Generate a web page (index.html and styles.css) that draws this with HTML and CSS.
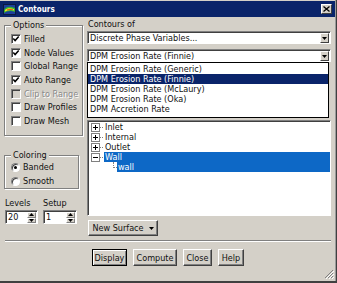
FILE: index.html
```html
<!DOCTYPE html>
<html lang="en">
<head>
<meta charset="UTF-8">
<meta name="viewport" content="width=device-width, initial-scale=1.0">
<title>Contours</title>
<link rel="stylesheet" href="styles.css">
</head>
<body>
  <div class="window">
    <div class="titlebar">
      <svg class="app-icon" width="13" height="11" viewBox="0 0 13 11">
        <rect x="0.5" y="0.5" width="12" height="10" fill="#1c3f9c" stroke="#0a1a40"/>
        <path d="M1 6 C3 2, 7 2, 12 4 L12 8 C8 6, 4 7, 1 9 Z" fill="#2fae3a"/>
        <path d="M2 6 C4 4, 7 4, 11 5 L11 6.5 C8 5.5, 5 6, 2 7.5 Z" fill="#f2e21c"/>
        <path d="M4 5.6 C6 4.8, 8 4.8, 10 5.3 L10 5.9 C8 5.6, 6 5.8, 4 6.4 Z" fill="#e23a1c"/>
      </svg>
      <span class="title">Contours</span>
      <span class="close-btn">
        <svg width="7" height="6" viewBox="0 0 7 6"><path d="M0.5 0.5 L6.5 5.5 M6.5 0.5 L0.5 5.5" stroke="#000" stroke-width="1.3"/></svg>
      </span>
    </div>

    <div class="content">
      <!-- left column -->
      <div class="left-col">
        <div class="group options">
          <span class="group-title">Options</span>
          <div class="check-row"><span class="check-box"><svg width="8" height="8" viewBox="0 0 8 8"><polyline points="1.3,3.6 3.1,5.6 6.7,1.4" fill="none" stroke="#000" stroke-width="1.5"/></svg></span>Filled</div>
          <div class="check-row"><span class="check-box"><svg width="8" height="8" viewBox="0 0 8 8"><polyline points="1.3,3.6 3.1,5.6 6.7,1.4" fill="none" stroke="#000" stroke-width="1.5"/></svg></span>Node Values</div>
          <div class="check-row"><span class="check-box"></span>Global Range</div>
          <div class="check-row"><span class="check-box"><svg width="8" height="8" viewBox="0 0 8 8"><polyline points="1.3,3.6 3.1,5.6 6.7,1.4" fill="none" stroke="#000" stroke-width="1.5"/></svg></span>Auto Range</div>
          <div class="check-row disabled"><span class="check-box"></span>Clip to Range</div>
          <div class="check-row"><span class="check-box"></span>Draw Profiles</div>
          <div class="check-row"><span class="check-box"></span>Draw Mesh</div>
        </div>

        <div class="group coloring">
          <span class="group-title">Coloring</span>
          <div class="radio-row"><span class="radio-dot on"></span>Banded</div>
          <div class="radio-row"><span class="radio-dot"></span>Smooth</div>
        </div>

        <div class="spin-row">
          <div class="spin-field levels">
            <div class="spin-label">Levels</div>
            <div class="spin">
              <span class="spin-value">20</span>
              <span class="spin-btns">
                <span class="spin-btn"><svg width="5" height="3" viewBox="0 0 5 3"><path d="M2.5 0 L5 3 L0 3 Z" fill="#000"/></svg></span>
                <span class="spin-btn"><svg width="5" height="3" viewBox="0 0 5 3"><path d="M0 0 L5 0 L2.5 3 Z" fill="#000"/></svg></span>
              </span>
            </div>
          </div>
          <div class="spin-field setup">
            <div class="spin-label">Setup</div>
            <div class="spin">
              <span class="spin-value">1</span>
              <span class="spin-btns">
                <span class="spin-btn"><svg width="5" height="3" viewBox="0 0 5 3"><path d="M2.5 0 L5 3 L0 3 Z" fill="#000"/></svg></span>
                <span class="spin-btn"><svg width="5" height="3" viewBox="0 0 5 3"><path d="M0 0 L5 0 L2.5 3 Z" fill="#000"/></svg></span>
              </span>
            </div>
          </div>
        </div>
      </div>

      <!-- right column -->
      <div class="right-col">
        <div class="field-label">Contours of</div>
        <div class="combo first">
          <span class="combo-text">Discrete Phase Variables...</span>
          <span class="combo-arrow"><svg width="5" height="3" viewBox="0 0 5 3"><path d="M0 0 L5 0 L2.5 3 Z" fill="#000"/></svg></span>
        </div>
        <div class="combo-wrap">
          <div class="combo">
            <span class="combo-text">DPM Erosion Rate (Finnie)</span>
            <span class="combo-arrow"><svg width="5" height="3" viewBox="0 0 5 3"><path d="M0 0 L5 0 L2.5 3 Z" fill="#000"/></svg></span>
          </div>
          <div class="popup">
            <div class="popup-item">DPM Erosion Rate (Generic)</div>
            <div class="popup-item selected">DPM Erosion Rate (Finnie)</div>
            <div class="popup-item">DPM Erosion Rate (McLaury)</div>
            <div class="popup-item">DPM Erosion Rate (Oka)</div>
            <div class="popup-item">DPM Accretion Rate</div>
          </div>
        </div>

        <div class="under-popup">
          <span class="hidden-field"></span>
          <span class="hidden-field"></span>
          <span class="hidden-field"></span>
          <span class="hidden-field"></span>
        </div>

        <div class="surface-list">
          <div class="tree-row"><svg width="9" height="9" viewBox="0 0 9 9"><rect x="0.5" y="0.5" width="8" height="8" fill="#fff" stroke="#808080"/><path d="M2 4.5h5M4.5 2v5" stroke="#000"/></svg><span class="tree-line"></span><span class="tree-label">Inlet</span></div>
          <div class="tree-row"><svg width="9" height="9" viewBox="0 0 9 9"><rect x="0.5" y="0.5" width="8" height="8" fill="#fff" stroke="#808080"/><path d="M2 4.5h5M4.5 2v5" stroke="#000"/></svg><span class="tree-line"></span><span class="tree-label">Internal</span></div>
          <div class="tree-row"><svg width="9" height="9" viewBox="0 0 9 9"><rect x="0.5" y="0.5" width="8" height="8" fill="#fff" stroke="#808080"/><path d="M2 4.5h5M4.5 2v5" stroke="#000"/></svg><span class="tree-line"></span><span class="tree-label">Outlet</span></div>
          <div class="tree-row selected"><svg width="9" height="9" viewBox="0 0 9 9"><rect x="0.5" y="0.5" width="8" height="8" fill="#fff" stroke="#808080"/><path d="M2 4.5h5" stroke="#000"/></svg><span class="tree-line"></span><span class="tree-label">Wall</span></div>
          <div class="tree-row child selected"><span class="tree-elbow"></span><span class="tree-label">wall</span></div>
        </div>

        <div class="btn new-surface">New Surface <svg width="5" height="3" viewBox="0 0 5 3"><path d="M0 0 L5 0 L2.5 3 Z" fill="#000"/></svg></div>
      </div>
    </div>

    <div class="separator"></div>

    <div class="button-row">
      <div class="btn default display">Display</div>
      <div class="btn compute">Compute</div>
      <div class="btn close">Close</div>
      <div class="btn help">Help</div>
    </div>

    <div class="grip-row">
      <svg class="grip" width="10" height="10" viewBox="0 0 10 10">
        <path d="M9 1 L1 9 M9 4 L4 9 M9 7 L7 9" stroke="#808080"/>
        <path d="M10 2 L2 10 M10 5 L5 10 M10 8 L8 10" stroke="#fff"/>
      </svg>
    </div>
  </div>
</body>
</html>
```

FILE: styles.css
```css
body {
  margin: 0;
  background-color: #404040;
  font-family: "DejaVu Sans Condensed", "Liberation Sans", sans-serif;
  font-size: 9px;
  color: #111;
}
.window {
  width: 335px;
  height: 281px;
  background-color: #d4d0c8;
  border-right: 1px solid #9a9a9a;
  overflow: hidden;
}

/* title bar */
.titlebar {
  height: 16px;
  border-top: 1px solid #d4d0c8;
  background-color: #0a246a;
  color: #fff;
  display: flex;
  align-items: center;
  padding-left: 3px;
}
.app-icon {
  margin-right: 2px;
}
.title {
  font-weight: bold;
  font-size: 8px;
}
.close-btn {
  margin-left: auto;
  margin-right: 3px;
  width: 9px;
  height: 8px;
  background-color: #d4d0c8;
  border: 1px solid;
  border-color: #fff #404040 #404040 #fff;
  display: flex;
  align-items: center;
  justify-content: center;
}

/* main area */
.content {
  display: flex;
  padding-left: 4px;
  gap: 3px;
}
.left-col {
  width: 80px;
  display: flex;
  flex-direction: column;
  align-items: flex-start;
}
.right-col {
  width: 244px;
  padding-top: 2px;
  display: flex;
  flex-direction: column;
}

/* group boxes */
.group {
  box-sizing: border-box;
  border: 1px solid #808080;
  box-shadow: 1px 1px 0 #fff, inset 1px 1px 0 #fff;
  display: flex;
  flex-direction: column;
  align-items: flex-start;
}
.group-title {
  margin-top: -6px;
  line-height: 10px;
  padding: 0 2px;
  background-color: #d4d0c8;
}
.options {
  margin-top: 8px;
  width: 79px;
  height: 111px;
  padding: 0 0 7px 6px;
}
.options .group-title {
  margin-bottom: 2px;
}
.coloring {
  margin-top: 19px;
  width: 75px;
  height: 34px;
  padding-left: 6px;
}

.check-row {
  display: flex;
  align-items: center;
  height: 13.7px;
  white-space: nowrap;
}
.check-box {
  width: 8px;
  height: 8px;
  background-color: #fff;
  border: 1px solid;
  border-color: #808080 #fff #fff #808080;
  box-shadow: inset 1px 1px 0 #404040;
  margin-right: 3px;
  display: flex;
}
.check-row.disabled {
  color: #8a8a8a;
  text-shadow: 1px 1px 0 #fff;
}
.check-row.disabled .check-box {
  background-color: #d4d0c8;
}

.radio-row {
  display: flex;
  align-items: center;
  height: 14px;
}
.radio-dot {
  width: 7px;
  height: 7px;
  border-radius: 50%;
  background-color: #fff;
  border: 1px solid;
  border-color: #808080 #fff #fff #808080;
  box-shadow: inset 1px 1px 0 #404040;
  margin-right: 3px;
  display: flex;
  align-items: center;
  justify-content: center;
}
.radio-dot.on::after {
  content: "";
  width: 3px;
  height: 3px;
  border-radius: 50%;
  background-color: #000;
}

/* spinners */
.spin-row {
  display: flex;
  margin-top: 9px;
  gap: 5px;
  margin-left: 1px;
}
.spin-label {
  line-height: 10px;
  margin-bottom: 2px;
}
.levels .spin {
  width: 33px;
}
.setup .spin {
  width: 34px;
}
.spin {
  height: 14px;
  box-sizing: border-box;
  display: flex;
  background-color: #fff;
  border: 1px solid;
  border-color: #808080 #fff #fff #808080;
  box-shadow: inset 1px 1px 0 #404040;
  padding: 1px 1px 0 0;
}
.spin-value {
  flex: 1;
  padding-left: 2px;
  line-height: 11px;
}
.spin-btns {
  width: 9px;
  display: flex;
  flex-direction: column;
}
.spin-btn {
  flex: 1;
  background-color: #d4d0c8;
  box-sizing: border-box;
  border: 1px solid;
  border-color: #fff #808080 #808080 #fff;
  display: flex;
  align-items: center;
  justify-content: center;
}

/* combos */
.field-label {
  line-height: 10px;
  padding-left: 1px;
}
.combo {
  height: 13px;
  box-sizing: border-box;
  background-color: #fff;
  border: 1px solid;
  border-color: #808080 #fff #fff #808080;
  box-shadow: inset 1px 1px 0 #404040;
  display: flex;
  align-items: center;
  padding: 1px 1px 0 2px;
}
.combo.first {
  margin-top: 2px;
}
.combo-wrap {
  margin-top: 5px;
  position: relative;
}
.combo-text {
  flex: 1;
  line-height: 10px;
  white-space: nowrap;
}
.combo-arrow {
  width: 9px;
  height: 10px;
  box-sizing: border-box;
  background-color: #d4d0c8;
  border: 1px solid;
  border-color: #fff #404040 #404040 #fff;
  display: flex;
  align-items: center;
  justify-content: center;
}

/* drop-down list of the second combo */
.popup {
  position: absolute;
  top: 13px;
  left: 0;
  width: 240px;
  height: 53px;
  background-color: #fff;
  border: 1px solid #000;
  padding-top: 1px;
  z-index: 5;
}
.popup-item {
  height: 10px;
  line-height: 10px;
  padding-left: 2px;
  white-space: nowrap;
}
.popup-item.selected {
  background-color: #0a246a;
  color: #fff;
}

/* fields hidden behind the list */
.under-popup {
  height: 58px;
  display: flex;
  justify-content: flex-end;
  align-items: flex-end;
  gap: 6px;
  padding-right: 2px;
}
.hidden-field {
  width: 17px;
  height: 4px;
  margin-bottom: 3px;
  border-bottom: 1px solid #909090;
}

/* surfaces */
.surface-list {
  height: 93px;
  background-color: #fff;
  border: 1px solid;
  border-color: #808080 #fff #fff #808080;
  box-shadow: inset 1px 1px 0 #404040;
  padding: 1px 0 0 1px;
}
.tree-row {
  display: flex;
  align-items: center;
  height: 10px;
  padding-left: 2px;
}
.tree-line {
  width: 3px;
  border-top: 1px dotted #808080;
}
.tree-label {
  line-height: 10px;
  padding: 0 1px;
  margin-left: 1px;
}
.tree-row.selected .tree-label {
  flex: 1;
  background-color: #0d68c6;
  color: #fff;
}
.tree-row.child {
  padding-left: 24px;
  align-items: flex-start;
}
.tree-elbow {
  width: 3px;
  height: 5px;
  border-left: 1px dotted #808080;
  border-bottom: 1px dotted #808080;
}
.tree-row.child .tree-label {
  margin-left: 0;
}

/* buttons */
.btn {
  height: 17px;
  box-sizing: border-box;
  background-color: #d4d0c8;
  border: 1px solid;
  border-color: #fff #404040 #404040 #fff;
  box-shadow: inset -1px -1px 0 #808080;
  display: flex;
  align-items: center;
  justify-content: center;
  white-space: nowrap;
}
.btn.default {
  border-color: #000;
  box-shadow: inset 1px 1px 0 #fff, inset -1px -1px 0 #808080;
}
.new-surface {
  margin-top: 4px;
  width: 70px;
  height: 16px;
  margin-left: 1px;
  gap: 5px;
}
.separator {
  margin: 4px 0 0 5px;
  width: 326px;
  border-top: 1px solid #808080;
  border-bottom: 1px solid #fff;
}
.button-row {
  display: flex;
  gap: 6px;
  margin-top: 7px;
  padding-left: 92px;
}
.display { width: 35px; }
.compute { width: 44px; }
.close { width: 29px; }
.help { width: 26px; }

.grip-row {
  display: flex;
  justify-content: flex-end;
  margin-top: 3px;
  padding-right: 1px;
}
```
